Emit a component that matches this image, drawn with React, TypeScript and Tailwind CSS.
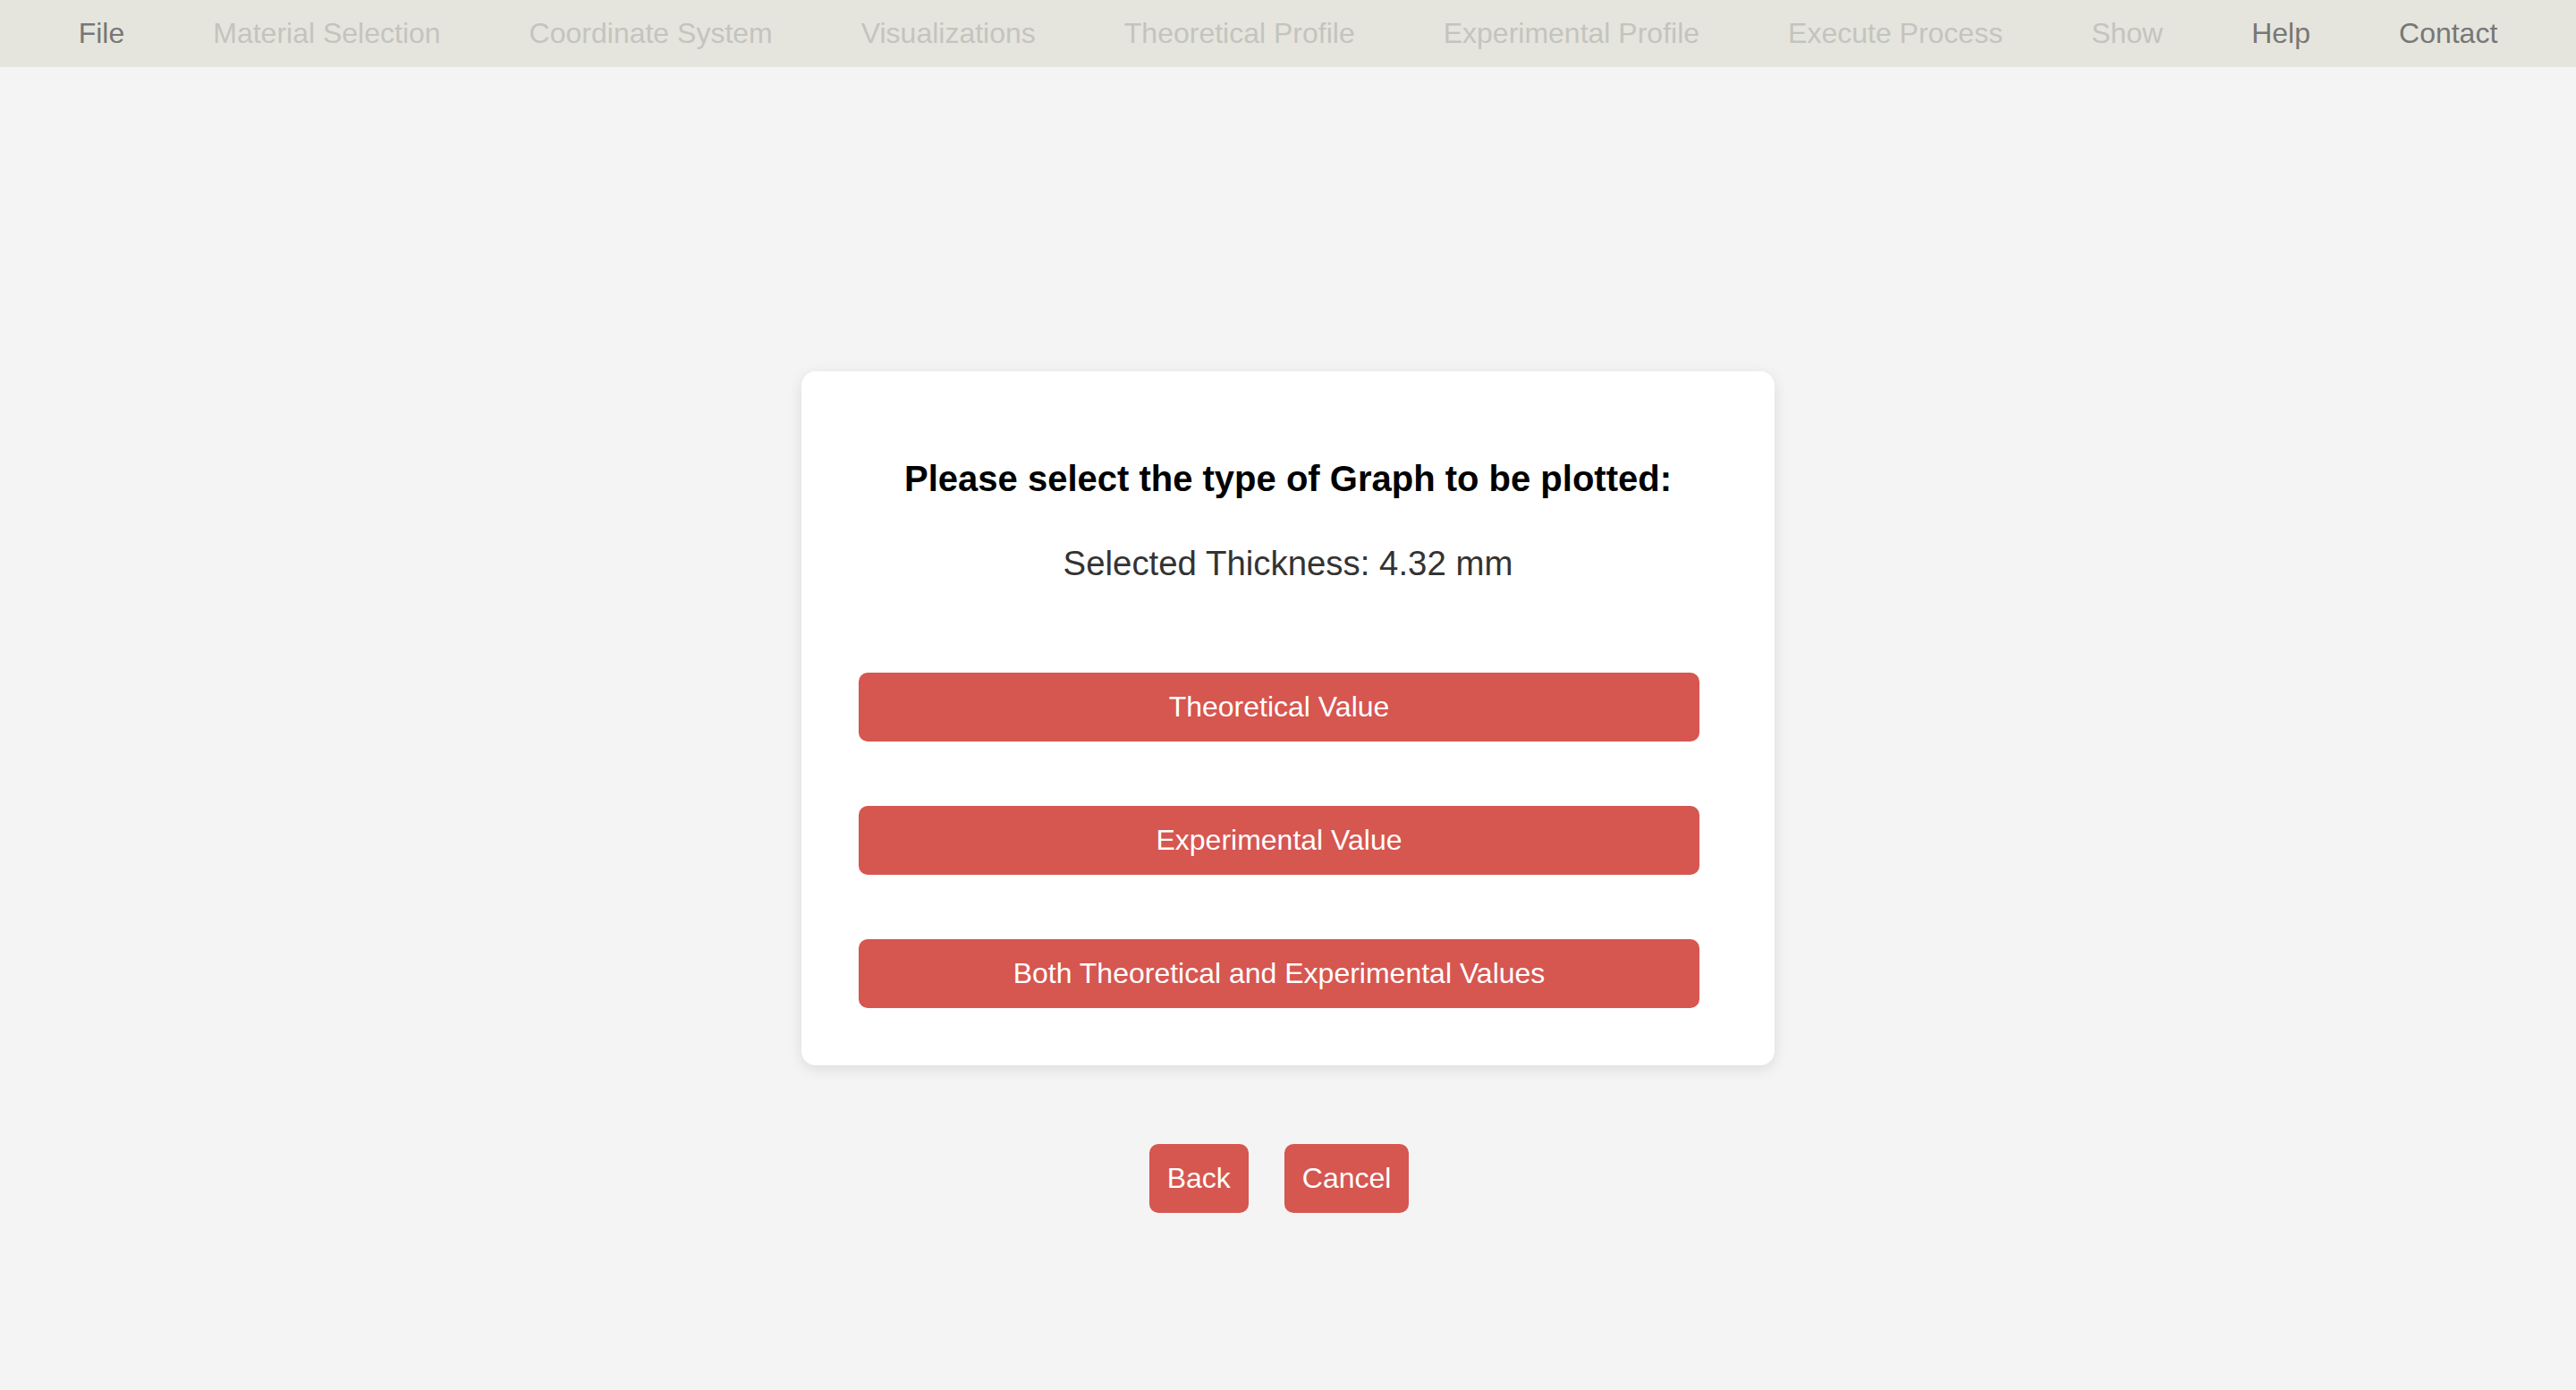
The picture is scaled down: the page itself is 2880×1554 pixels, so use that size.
import React from "react";

const navItems = [
  { label: "File", active: true },
  { label: "Material Selection", active: false },
  { label: "Coordinate System", active: false },
  { label: "Visualizations", active: false },
  { label: "Theoretical Profile", active: false },
  { label: "Experimental Profile", active: false },
  { label: "Execute Process", active: false },
  { label: "Show", active: false },
  { label: "Help", active: true },
  { label: "Contact", active: true },
];

const options = [
  "Theoretical Value",
  "Experimental Value",
  "Both Theoretical and Experimental Values",
];

function App() {
  return (
    <div
      className="min-h-screen bg-[#f4f4f4] leading-[normal]"
      style={{ fontFamily: '"Liberation Sans", Arial, sans-serif' }}
    >
      <nav className="h-[75px] bg-[#e5e5dd] flex items-center justify-center gap-[99px]">
        {navItems.map((item) => (
          <span
            key={item.label}
            className={`text-[32px] leading-[normal] ${item.active ? "text-[#777777]" : "text-[#c4c4bf]"}`}
          >
            {item.label}
          </span>
        ))}
      </nav>

      <main className="flex flex-col items-center pt-[340px]">
        <div className="w-[1088px] bg-white rounded-[16px] shadow-[0_4px_16px_rgba(0,0,0,0.1)] p-[64px]">
          <h2 className="mt-[34px] text-center text-[40px] leading-[normal] font-bold text-black">
            Please select the type of Graph to be plotted:
          </h2>
          <p className="mt-[50px] text-center text-[38.4px] leading-[normal] text-[#333333]">
            Selected Thickness: 4.32 mm
          </p>
          <div className="mt-[100px] flex flex-col gap-[72px]">
            {options.map((opt) => (
              <button
                key={opt}
                className="w-[940px] py-[20px] bg-[#d65650] text-white text-[32px] leading-[normal] rounded-[10px]"
              >
                {opt}
              </button>
            ))}
          </div>
        </div>

        <div className="mt-[88px] flex pr-[20px]">
          <button className="mr-[40px] px-[20px] py-[20px] bg-[#d65650] text-white text-[32px] leading-[normal] rounded-[10px]">
            Back
          </button>
          <button className="px-[20px] py-[20px] bg-[#d65650] text-white text-[32px] leading-[normal] rounded-[10px]">
            Cancel
          </button>
        </div>
      </main>
    </div>
  );
}

export default App;
